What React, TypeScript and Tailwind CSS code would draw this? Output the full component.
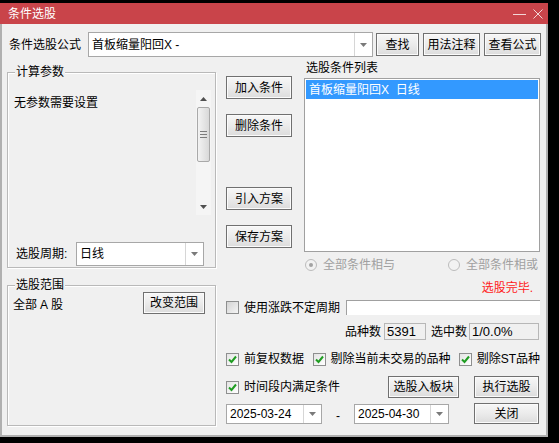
import React from 'react';

const btn =
  'flex items-center justify-center border border-[#707070] bg-linear-to-b from-[#f7f7f7] via-[#ebebeb] to-[#dcdcdc] shadow-[inset_0_0_0_1px_#fbfbfb] leading-none whitespace-nowrap';

const Arrow = ({ up = false, color = '#7a7a7a' }: { up?: boolean; color?: string }) => (
  <svg width="7" height="4" viewBox="0 0 7 4">
    <path d={up ? 'M0 4h7L3.5 0z' : 'M0 0h7L3.5 4z'} fill={color} />
  </svg>
);

const Combo = ({ className, text, textClass = '' }: { className: string; text: string; textClass?: string }) => (
  <div className={`flex bg-white border border-[#a7a7a7] ${className}`}>
    <div className={`flex-1 flex items-center pl-[3px] whitespace-pre ${textClass}`}>{text}</div>
    <div className="w-[18px] border-l border-[#d6d6d6] flex items-center justify-center">
      <Arrow />
    </div>
  </div>
);

const Check = ({ checked = true }: { checked?: boolean }) => (
  <div
    className={`w-[13px] h-[13px] shrink-0 border border-[#8e8f8f] flex items-center justify-center ${
      checked ? 'bg-linear-to-br from-[#e4e4e4] to-white' : 'bg-linear-to-br from-[#d4d4d4] to-[#f4f4f4]'
    }`}
  >
    {checked && (
      <svg width="11" height="11" viewBox="0 0 11 11">
        <path d="M2 5.5 L4.5 8 L9 2.5" fill="none" stroke="#1f9d22" strokeWidth="2" />
      </svg>
    )}
  </div>
);

const Radio = ({ checked = false }: { checked?: boolean }) => (
  <div className="w-[12px] h-[12px] rounded-full border border-[#bcbcbc] bg-[#f2f2f2] flex items-center justify-center shrink-0">
    {checked && <div className="w-[4px] h-[4px] rounded-full bg-[#a3a3a3]" />}
  </div>
);

const Group = ({ title, className, children }: { title: string; className: string; children: React.ReactNode }) => (
  <div className={`relative border border-[#b9b9b9] shadow-[inset_1px_1px_0_#fff,1px_1px_0_#fff] ${className}`}>
    <span className="absolute left-[7px] -top-[8px] px-[1px] bg-[#f0f0f0] leading-[14px]">{title}</span>
    {children}
  </div>
);

export default function App() {
  return (
    <div className="w-[559px] h-[443px] bg-black pt-[3px] text-[12px] text-black font-['Liberation_Sans','Noto_Sans_CJK_SC',sans-serif]">
      <div className="w-[548px] h-[434px] flex flex-col bg-[#f0f0f0]">
        {/* title bar */}
        <div className="h-[21px] shrink-0 bg-[#c9444a] flex items-center pl-[8px] text-white">
          <span className="leading-none">条件选股</span>
          <div className="ml-auto flex items-center gap-[7px] pr-[5px]">
            <svg width="13" height="10" viewBox="0 0 13 10">
              <path d="M0 5.5h13" stroke="#f3d6d7" strokeWidth="1" />
            </svg>
            <svg width="10" height="10" viewBox="0 0 10 10">
              <path d="M0.5 0.5l9 9M9.5 0.5l-9 9" stroke="#f3d6d7" strokeWidth="1" />
            </svg>
          </div>
        </div>

        <div className="flex-1 flex flex-col border-x-2 border-b-2 border-[#b0b0b0]">
          {/* formula row */}
          <div className="mt-[8px] h-[25px] flex items-center pl-[7px]">
            <span className="w-[79px] leading-none">条件选股公式</span>
            <Combo className="w-[285px] h-[25px]" text="首板缩量阳回X -" />
            <div className={`${btn} ml-[3px] w-[43px] h-[23px]`}>查找</div>
            <div className={`${btn} ml-[4px] w-[57px] h-[23px]`}>用法注释</div>
            <div className={`${btn} ml-[4px] w-[57px] h-[23px]`}>查看公式</div>
          </div>

          {/* upper section */}
          <div className="h-[223px] flex">
            <div className="ml-[5px] w-[209px] pt-[15px]">
              <Group title="计算参数" className="h-[196px] flex flex-col">
                <div className="flex pt-[17px]">
                  <div className="flex-1 pl-[6px] pt-[6px] leading-[14px]">无参数需要设置</div>
                  <div className="w-[15px] h-[125px] mr-[4px] bg-[#f5f5f5] flex flex-col items-center">
                    <div className="h-[17px] flex items-center justify-center">
                      <Arrow up color="#505050" />
                    </div>
                    <div className="w-[13px] h-[55px] border border-[#a9a9a9] rounded-[2px] bg-linear-to-r from-[#f3f3f3] to-[#d9d9d9] flex flex-col items-center justify-center gap-[2px]">
                      <div className="w-[7px] h-px bg-[#7c7c7c]" />
                      <div className="w-[7px] h-px bg-[#7c7c7c]" />
                      <div className="w-[7px] h-px bg-[#7c7c7c]" />
                    </div>
                    <div className="flex-1" />
                    <div className="h-[17px] flex items-center justify-center">
                      <Arrow color="#505050" />
                    </div>
                  </div>
                </div>
                <div className="mt-[27px] h-[24px] flex items-center pl-[8px]">
                  <span className="w-[60px] leading-none">选股周期:</span>
                  <Combo className="w-[128px] h-[24px]" text="日线" />
                </div>
              </Group>
            </div>

            <div className="ml-[10px] w-[66px] flex flex-col">
              <div className={`${btn} mt-[19px] h-[23px]`}>加入条件</div>
              <div className={`${btn} mt-[15px] h-[23px]`}>删除条件</div>
              <div className={`${btn} mt-[50px] h-[23px]`}>引入方案</div>
              <div className={`${btn} mt-[15px] h-[23px]`}>保存方案</div>
            </div>

            <div className="ml-[12px] w-[236px] flex flex-col">
              <div className="mt-[3px] h-[16px] leading-[16px] pl-[2px]">选股条件列表</div>
              <div className="mt-[2px] h-[174px] bg-white border border-[#a0a0a0] p-px">
                <div className="h-[19px] bg-[#3399ff] text-white flex items-center pl-[3px] whitespace-pre">
                  首板缩量阳回X  日线
                </div>
              </div>
              <div className="mt-[6px] h-[14px] flex items-center text-[#a0a0a0]">
                <div className="w-[144px] flex items-center pl-[1px]">
                  <Radio checked />
                  <span className="ml-[6px] leading-none">全部条件相与</span>
                </div>
                <Radio />
                <span className="ml-[6px] leading-none">全部条件相或</span>
              </div>
            </div>
          </div>

          {/* lower section */}
          <div className="flex-1 flex">
            <div className="ml-[5px] w-[209px] pt-[5px]">
              <Group title="选股范围" className="h-[141px]">
                <div className="flex pt-[6px]">
                  <span className="pl-[5px] mt-[6px] leading-[14px] whitespace-nowrap">
                    全部<span className="px-[3px]">A</span>股
                  </span>
                  <div className={`${btn} ml-auto mr-[10px] w-[62px] h-[22px]`}>改变范围</div>
                </div>
              </Group>
            </div>

            <div className="ml-[10px] w-[314px] flex flex-col whitespace-nowrap">
              <div className="h-[16px] flex items-center justify-end pr-[7px] text-[#ff1a1a] leading-none">选股完毕.</div>

              <div className="mt-[4px] h-[15px] flex items-center">
                <Check checked={false} />
                <span className="ml-[5px] leading-none">使用涨跌不定周期</span>
                <div className="ml-auto w-[194px] h-[15px] bg-white border-t border-l border-[#a0a0a0]" />
              </div>

              <div className="mt-[8px] h-[17px] flex items-center justify-end pr-px">
                <span className="leading-none">品种数</span>
                <div className="ml-[3px] w-[42px] h-[17px] border border-[#b7b7b7] bg-[#f0f0f0] flex items-center pl-[2px] leading-none text-[13px]">
                  5391
                </div>
                <span className="ml-[5px] leading-none">选中数</span>
                <div className="ml-[2px] w-[70px] h-[17px] border border-[#b7b7b7] bg-[#f0f0f0] flex items-center pl-[2px] leading-none text-[13px]">
                  1/0.0%
                </div>
              </div>

              <div className="mt-[12px] h-[14px] flex items-center">
                <div className="w-[87px] flex items-center">
                  <Check />
                  <span className="ml-[5px] leading-none">前复权数据</span>
                </div>
                <div className="w-[147px] flex items-center">
                  <Check />
                  <span className="ml-[5px] leading-none">剔除当前未交易的品种</span>
                </div>
                <Check />
                <span className="ml-[5px] leading-none">剔除ST品种</span>
              </div>

              <div className="mt-[10px] h-[22px] flex items-center">
                <Check />
                <span className="ml-[5px] leading-none">时间段内满足条件</span>
                <div className={`${btn} ml-auto w-[71px] h-[22px]`}>选股入板块</div>
                <div className={`${btn} ml-[15px] mr-px w-[65px] h-[22px]`}>执行选股</div>
              </div>

              <div className="mt-[5px] h-[21px] flex items-end">
                <Combo className="w-[96px] h-[20px]" text="2025-03-24" textClass="leading-none" />
                <span className="w-[32px] h-[20px] flex items-center justify-center leading-none pt-[4px]">-</span>
                <Combo className="w-[95px] h-[20px]" text="2025-04-30" textClass="leading-none" />
                <div className={`${btn} ml-auto mr-px w-[65px] h-[21px]`}>关闭</div>
              </div>
            </div>
          </div>
        </div>
      </div>
    </div>
  );
}
